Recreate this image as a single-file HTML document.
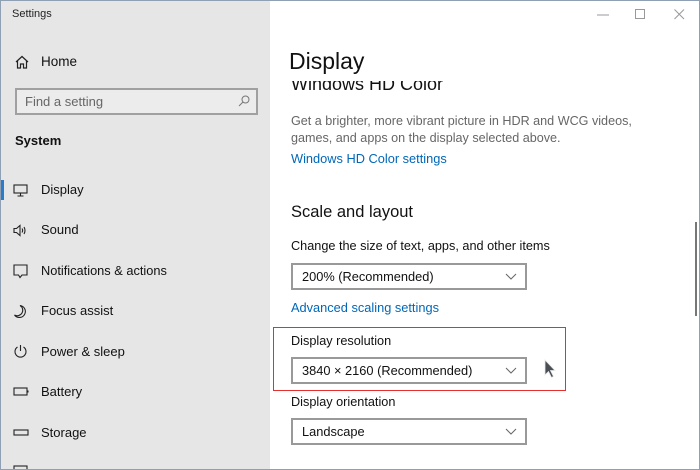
<!DOCTYPE html>
<html><head><meta charset="utf-8"><style>
*{margin:0;padding:0;box-sizing:border-box}
body{width:700px;height:470px;overflow:hidden;font-family:"Liberation Sans",sans-serif;background:#fff;position:relative}
.win{position:absolute;left:0;top:0;width:700px;height:470px;overflow:hidden}
.frame{position:absolute;left:0;top:0;width:700px;height:470px;border:1px solid #8fa0b4;pointer-events:none}
.left{position:absolute;left:0;top:0;width:270px;height:470px;background:#e6e6e6}
.t{position:absolute;white-space:nowrap;color:#000}
.nav{position:absolute;left:41px;font-size:13px;color:#111}
.ic{position:absolute;left:13px}
.dd{position:absolute;left:291px;width:236px;height:27px;border:2px solid #999;background:#fff;font-size:12.8px;padding-left:9px;line-height:23px;color:#111}
.dd svg{position:absolute;right:8px;top:8px}
.lbl{position:absolute;left:291px;font-size:12.7px;color:#111}
.link{color:#0067b8}
</style></head><body>
<div class="win">
<div class="left">
<div class="t" style="left:12px;top:8px;font-size:11px;color:#222">Settings</div>
<svg class="ic" style="left:15px;top:55px" width="14" height="14" viewBox="0 0 14 14" fill="none" stroke="#222" stroke-width="1.2"><path d="M1 7L7 1.5L13 7M2.5 5.7V13H5.5V9H8.5V13H11.5V5.7"/></svg>
<div class="nav" style="top:54px;font-size:13.5px">Home</div>
<div style="position:absolute;left:15px;top:88px;width:243px;height:27px;border:2px solid #a0a0a0;background:#ececec"></div>
<div class="t" style="left:25px;top:94px;font-size:13px;color:#666">Find a setting</div>
<svg style="position:absolute;left:238px;top:95px" width="12" height="12" viewBox="0 0 12 12" fill="none" stroke="#777" stroke-width="1"><circle cx="7.5" cy="4.5" r="3.5"/><path d="M5 7L1 11"/></svg>
<div class="t" style="left:15px;top:133px;font-size:13px;font-weight:bold;color:#111">System</div>
<div style="position:absolute;left:0;top:180px;width:4px;height:20px;background:#2b7bcb"></div>
<svg class="ic" style="top:184px" width="16" height="13" viewBox="0 0 16 13" fill="none" stroke="#222" stroke-width="1.1"><rect x="1" y="1" width="13" height="8"/><path d="M7.5 9V12M4.5 12H10.5"/></svg>
<div class="nav" style="top:182px">Display</div>
<svg class="ic" style="top:224px" width="16" height="13" viewBox="0 0 16 13" fill="none" stroke="#222" stroke-width="1.1"><path d="M1 4.5H3.5L7 1.5V11.5L3.5 8.5H1Z"/><path d="M9 4.5Q10.3 6.5 9 8.5M11 3Q13 6.5 11 10"/></svg>
<div class="nav" style="top:222px">Sound</div>
<svg class="ic" style="top:264px" width="16" height="15" viewBox="0 0 16 15" fill="none" stroke="#222" stroke-width="1.1"><path d="M1 1H14V11H9L7 13.5L5.5 11H1Z"/></svg>
<div class="nav" style="top:263px;font-size:12.8px">Notifications &amp; actions</div>
<svg class="ic" style="top:304px" width="16" height="15" viewBox="0 0 16 15" fill="none" stroke="#222" stroke-width="1.1"><path d="M7 1.5A6 6 0 1 1 1.5 11A5 5 0 0 0 7 1.5Z"/></svg>
<div class="nav" style="top:303px">Focus assist</div>
<svg class="ic" style="top:344px" width="16" height="15" viewBox="0 0 16 15" fill="none" stroke="#222" stroke-width="1.1"><path d="M7.5 1V7M4.5 3A5.5 5.5 0 1 0 10.5 3"/></svg>
<div class="nav" style="top:344px">Power &amp; sleep</div>
<svg class="ic" style="top:387px" width="18" height="10" viewBox="0 0 18 10" fill="none" stroke="#222" stroke-width="1.1"><rect x="1" y="1" width="13" height="7"/><path d="M15 3.5V5.5"/></svg>
<div class="nav" style="top:384px">Battery</div>
<svg class="ic" style="top:429px" width="18" height="8" viewBox="0 0 18 8" fill="none" stroke="#222" stroke-width="1.1"><rect x="1" y="1" width="14" height="5"/></svg>
<div class="nav" style="top:425px">Storage</div>
<svg class="ic" style="top:465px" width="18" height="8" viewBox="0 0 18 8" fill="none" stroke="#222" stroke-width="1.1"><rect x="1" y="1" width="13" height="7"/></svg>
</div>
<svg style="position:absolute;left:597px;top:14px" width="12" height="2"><path d="M0 1H12" stroke="#999"/></svg>
<svg style="position:absolute;left:635px;top:9px" width="11" height="11"><rect x="0.5" y="0.5" width="9" height="9" fill="none" stroke="#999"/></svg>
<svg style="position:absolute;left:674px;top:9px" width="11" height="11"><path d="M0.5 0.5L10 10M10 0.5L0.5 10" stroke="#999"/></svg>
<div class="t" style="left:289px;top:48px;font-size:23px;color:#111">Display</div>
<div style="position:absolute;left:280px;top:81px;width:300px;height:14px;overflow:hidden"><div class="t" style="left:11px;top:-7px;font-size:18px;color:#111">Windows HD Color</div></div>
<div class="t" style="left:291px;top:113px;font-size:12.6px;color:#666;line-height:17px">Get a brighter, more vibrant picture in HDR and WCG videos,<br>games, and apps on the display selected above.</div>
<div class="t link" style="left:291px;top:151px;font-size:12.8px">Windows HD Color settings</div>
<div class="t" style="left:291px;top:203px;font-size:16.5px;color:#111">Scale and layout</div>
<div class="lbl" style="top:239px">Change the size of text, apps, and other items</div>
<div class="dd" style="top:263px">200% (Recommended)<svg width="12" height="8"><path d="M1 1L6 6L11 1" fill="none" stroke="#666"/></svg></div>
<div class="t link" style="left:291px;top:300px;font-size:12.8px">Advanced scaling settings</div>
<div style="position:absolute;left:273px;top:327px;width:293px;height:64px;border:1.5px solid #e53030"></div>
<div class="lbl" style="top:334px">Display resolution</div>
<div class="dd" style="top:357px">3840 × 2160 (Recommended)<svg width="12" height="8"><path d="M1 1L6 6L11 1" fill="none" stroke="#666"/></svg></div>
<svg style="position:absolute;left:544px;top:359px" width="14" height="20" viewBox="0 0 14 20"><path d="M1 1V16L4.5 12.5L7.5 18.5L9.5 17.5L6.5 11.5H11Z" fill="#4a4f55" stroke="#e8e8e8" stroke-width="0.8"/></svg>
<div class="lbl" style="top:395px">Display orientation</div>
<div class="dd" style="top:418px">Landscape<svg width="12" height="8"><path d="M1 1L6 6L11 1" fill="none" stroke="#666"/></svg></div>
<div style="position:absolute;left:695px;top:222px;width:2px;height:94px;background:#777"></div>
</div>
<div class="frame"></div>
</body></html>
